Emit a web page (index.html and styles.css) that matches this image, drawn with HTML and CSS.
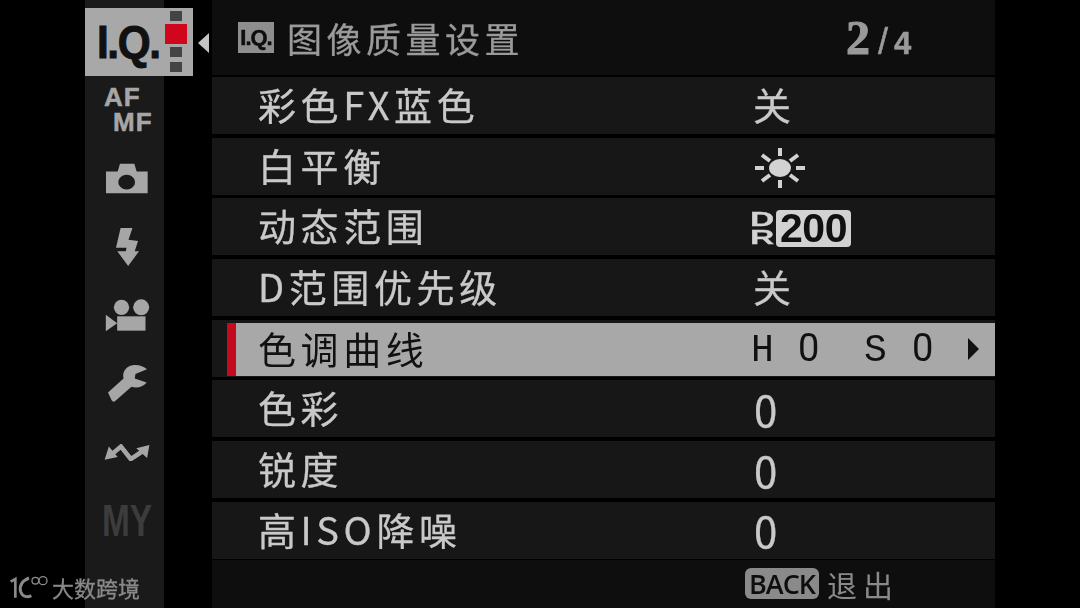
FILE: index.html
```html
<!DOCTYPE html>
<html lang="zh-CN">
<head>
    <meta charset="UTF-8">
    <title>图像质量设置</title>
    <link rel="stylesheet" href="styles.css">
</head>
<body>
    <div class="screen">
        <nav class="sidebar">
            <div class="tab-active">
                <span class="tab-label">I.Q.</span>
                <div class="pager">
                    <i></i>
                    <i class="on"></i>
                    <i></i>
                    <i></i>
                </div>
                <span class="tab-arrow"></span>
            </div>
            <div class="nav-item af"><span>AF</span><span class="mf">MF</span></div>
            <div class="nav-item">
                <svg width="42" height="31" viewBox="80 490 126 92"><path fill="#a6a6a6" fill-rule="evenodd" d="M80 515H115L122 492H165L172 515H205V580H80ZM142 525a25 22 0 1 0 .01 0z"/></svg>
            </div>
            <div class="nav-item">
                <svg width="25" height="40" viewBox="105 80 76 120"><path fill="#a6a6a6" d="M122 82H158L146 118 175 122 165 153H178L145 198 112 153H138L140 142H108Z"/></svg>
            </div>
            <div class="nav-item">
                <svg width="45" height="33" viewBox="76 295 134 99"><g fill="#a6a6a6"><circle cx="125" cy="320" r="23"/><circle cx="184" cy="320" r="24"/><rect x="112" y="347" width="85" height="43"/><path d="M78 342L112 368 78 392Z"/></g></svg>
            </div>
            <div class="nav-item">
                <svg width="41" height="39" viewBox="22 22 124 118"><path fill="#a6a6a6" d="M25 108L72 66C66 42 85 24 108 25 122 25 134 30 143 38L108 52 106 66 142 78C130 92 112 96 96 91L46 135Q40 138 36 132Z"/></svg>
            </div>
            <div class="nav-item">
                <svg width="48" height="17" viewBox="12 22 143 52"><path fill="none" stroke="#a6a6a6" stroke-width="14" d="M35 55L65 30 95 68 130 45"/><path fill="#a6a6a6" d="M15 70L28 30 55 62ZM152 25L145 65 112 35Z"/></svg>
            </div>
            <div class="nav-item my">MY</div>
        </nav>
        <main class="panel">
            <header class="panel-head">
                <span class="iq-badge">I.Q.</span>
                <h1>图像质量设置</h1>
                <div class="page-no"><b>2</b><span>/</span><em>4</em></div>
            </header>
            <ul class="rows">
                <li class="row"><span class="name">彩色FX蓝色</span><span class="val">关</span></li>
                <li class="row"><span class="name">白平衡</span>
                    <span class="val icon-val">
                        <svg width="52" height="40" viewBox="0 0 52 40"><g stroke="#d2d2d2" stroke-width="4"><path d="M26 0v8M26 32v8M1 20h9M42 20h9M8 7l8 6M36 27l8 6M44 7l-8 6M16 27l-8 6"/></g><ellipse cx="26" cy="20" rx="11" ry="9" fill="#d2d2d2"/></svg>
                    </span>
                </li>
                <li class="row"><span class="name">动态范围</span>
                    <span class="val icon-val dr"><span class="dr-letters"><span>D</span><span>R</span></span><span class="dr-num">200</span></span>
                </li>
                <li class="row"><span class="name">D范围优先级</span><span class="val">关</span></li>
                <li class="row selected">
                    <div class="sel-bar">
                        <span class="name">色调曲线</span>
                        <span class="val tone"><span class="mono">H</span><span>0</span><span class="mono">S</span><span>0</span><span class="tone-arrow"></span></span>
                    </div>
                </li>
                <li class="row"><span class="name">色彩</span><span class="val num">0</span></li>
                <li class="row"><span class="name">锐度</span><span class="val num">0</span></li>
                <li class="row"><span class="name">高ISO降噪</span><span class="val num">0</span></li>
            </ul>
            <footer class="panel-foot">
                <span class="back-key">BACK</span>
                <span class="back-text">退出</span>
            </footer>
        </main>
        <div class="watermark">
            <svg width="40" height="25" viewBox="25 525 120 75"><g fill="none" stroke="#8a8a8a"><path stroke-width="8" d="M30 548L44 540V596"/><path stroke-width="9" d="M85 537C65 545 55 560 60 578 65 594 80 596 92 590"/><circle cx="104" cy="545" r="10" stroke-width="4"/><circle cx="127" cy="545" r="12" stroke-width="4"/></g></svg>
            <span>大数跨境</span>
        </div>
    </div>
</body>
</html>
```

FILE: styles.css
```css
* {
    margin: 0;
    padding: 0;
    box-sizing: border-box;
}
body {
    background: #000;
    font-family: "Noto Sans CJK SC", "Noto Sans", sans-serif;
    overflow: hidden;
}
.screen {
    position: relative;
    width: 1080px;
    height: 608px;
    display: flex;
    padding-left: 85px;
    filter: blur(0.5px);
}
.sidebar {
    position: relative;
    width: 79px;
    height: 608px;
    background: #1a1a1a;
    padding: 76px 0 0 5px;
    flex-shrink: 0;
}
.tab-active {
    position: absolute;
    top: 8px;
    left: 0;
    width: 108px;
    height: 68px;
    background: #a8a8a8;
    display: flex;
    align-items: center;
}
.tab-label {
    font-family: "Liberation Sans", sans-serif;
    font-weight: 700;
    font-size: 46px;
    letter-spacing: -1.500px;
    color: #111;
    -webkit-text-stroke: 1px #111;
    width: 80px;
    padding-left: 13px;
    transform: scaleX(0.92);
    transform-origin: left center;
    white-space: nowrap;
}
.pager {
    display: flex;
    flex-direction: column;
    align-items: center;
    width: 22px;
    gap: 3px;
    height: 68px;
    padding-top: 3px;
}
.pager i {
    display: block;
    width: 12px;
    height: 10px;
    background: #444;
}
.pager i:last-child {
    margin-top: 2px;
}
.pager i.on {
    width: 22px;
    height: 20px;
    background: #d0061c;
}
.tab-arrow {
    position: absolute;
    left: 113px;
    top: 25px;
    border-style: solid;
    border-width: 10px 11px 10px 0;
    border-color: transparent #c4c4c4 transparent transparent;
}
.nav-item {
    height: 68.500px;
    display: flex;
    align-items: center;
    justify-content: center;
}
.af {
    flex-direction: column;
    align-items: flex-start;
    font-family: "Liberation Sans", sans-serif;
    font-weight: 700;
    font-size: 26px;
    line-height: 25px;
    letter-spacing: 1px;
    color: #a6a6a6;
    -webkit-text-stroke: 0.5px #a6a6a6;
    height: 68px;
    padding: 0 0 0 14px;
}
.af .mf {
    margin-left: 9px;
}
.my {
    font-family: "Liberation Sans", sans-serif;
    font-weight: 700;
    font-size: 44px;
    color: #3c3c3c;
    transform: scaleX(0.76);
}
.panel {
    width: 783px;
    margin-left: 48px;
    flex-shrink: 0;
    display: flex;
    flex-direction: column;
    color: #c9c9c9;
}
.panel-head {
    height: 75px;
    background: #0e0e0e;
    display: flex;
    align-items: center;
    padding-left: 26px;
    margin-bottom: 2px;
    color: #9a9a9a;
}
.iq-badge {
    width: 36px;
    height: 31px;
    background: #8e8e8e;
    color: #0e0e0e;
    font-family: "Liberation Sans", sans-serif;
    font-weight: 700;
    font-size: 22px;
    letter-spacing: -1px;
    line-height: 31px;
    text-align: center;
    -webkit-text-stroke: 0.5px #0e0e0e;
}
.panel-head h1 {
    font-size: 35px;
    font-weight: 400;
    letter-spacing: 4.500px;
    margin-left: 13px;
    line-height: 1;
    width: 559px;
    -webkit-text-stroke: 0.3px #9a9a9a;
}
.page-no {
    display: flex;
    align-items: baseline;
    font-family: "Liberation Serif", serif;
    font-weight: 700;
}
.page-no b {
    font-size: 48px;
    -webkit-text-stroke: 1px #9a9a9a;
}
.page-no span {
    font-family: "Liberation Sans", sans-serif;
    font-weight: 400;
    font-size: 36px;
    margin: 0 6px 0 8px;
    -webkit-text-stroke: 0.5px #9a9a9a;
}
.page-no em {
    font-family: "Liberation Sans", sans-serif;
    font-style: normal;
    font-size: 31px;
    -webkit-text-stroke: 0.5px #9a9a9a;
}
.rows {
    list-style: none;
}
.row {
    height: 57px;
    margin-bottom: 3.700px;
    background: #171717;
    display: flex;
    align-items: center;
    padding-left: 46px;
    font-size: 38px;
    -webkit-text-stroke: 0.3px #c9c9c9;
}
.row:last-child {
    margin-bottom: 0;
}
.name {
    width: 495px;
    letter-spacing: 4.600px;
    line-height: 1;
    padding-bottom: 3px;
    white-space: nowrap;
}
.val {
    line-height: 1;
    display: flex;
    align-items: center;
    padding-bottom: 3px;
}
.icon-val {
    padding: 3px 0 0;
    margin-left: 1px;
}
.num {
    font-size: 42px;
    margin-left: 1px;
    padding-bottom: 0;
}
.row.selected {
    align-items: flex-end;
    padding-left: 15px;
    -webkit-text-stroke: 0;
}
.sel-bar {
    flex: 1;
    height: 53px;
    margin-bottom: 1px;
    background: #a8a8a8;
    color: #111;
    border-left: 9px solid #c40a1e;
    padding-left: 22px;
    display: flex;
    align-items: center;
}
.dr-letters {
    display: flex;
    flex-direction: column;
    width: 26px;
    font-family: "Liberation Sans", sans-serif;
    font-weight: 700;
    font-size: 21px;
    line-height: 18px;
    color: #d2d2d2;
    margin-left: -4px;
    -webkit-text-stroke: 0.3px #d2d2d2;
}
.dr-letters span {
    transform: scaleX(1.600);
    transform-origin: left center;
}
.dr-num {
    background: #d2d2d2;
    color: #111;
    font-family: "Liberation Sans", sans-serif;
    font-weight: 700;
    font-size: 41px;
    line-height: 37px;
    height: 37px;
    width: 75px;
    border-radius: 4px;
    text-align: center;
    letter-spacing: -0.500px;
    -webkit-text-stroke: 0;
}
.tone {
    display: grid;
    grid-template-columns: 45px 68px 46px 56px auto;
    align-items: baseline;
    font-family: "Roboto", sans-serif;
    font-size: 38px;
    padding-bottom: 0;
}
.tone .mono {
    font-family: "Liberation Mono", monospace;
    margin-left: -2px;
}
.tone-arrow {
    align-self: center;
    border-style: solid;
    border-width: 11px 0 11px 11px;
    border-color: transparent transparent transparent #111;
}
.panel-foot {
    flex: 1;
    margin-top: 1px;
    background: #0e0e0e;
    display: flex;
    align-items: center;
    padding-left: 533px;
    color: #8a8a8a;
}
.back-key {
    background: #8a8a8a;
    color: #0e0e0e;
    font-family: "Open Sans", sans-serif;
    font-weight: 600;
    font-size: 27px;
    letter-spacing: -1px;
    line-height: 31px;
    height: 31px;
    width: 74px;
    text-align: center;
    border-radius: 6px;
}
.back-text {
    font-size: 30px;
    letter-spacing: 6px;
    margin-left: 8px;
    line-height: 1;
}
.watermark {
    position: absolute;
    left: 9px;
    top: 574px;
    display: flex;
    align-items: center;
    gap: 3px;
    color: #8a8a8a;
    font-size: 22px;
    line-height: 1;
    -webkit-text-stroke: 0.3px #8a8a8a;
}
```
